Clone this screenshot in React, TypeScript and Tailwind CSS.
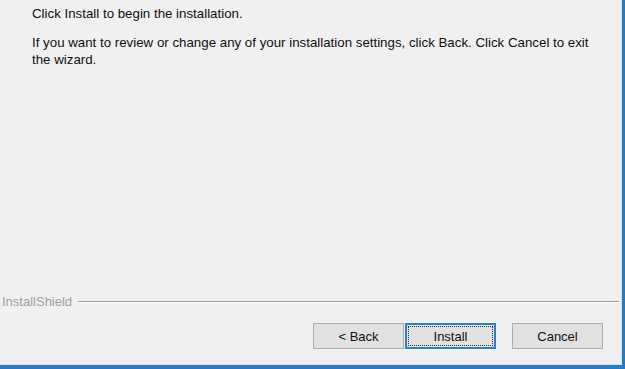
const font = { fontFamily: '"Liberation Sans", Arial, sans-serif' }

export default function App() {
  return (
    <div className="w-[625px] h-[369px] bg-[#2a7ac6] pr-[3px] pb-[4px]" style={font}>
      <div className="h-full bg-[#cfe3f4] pr-px pb-px">
        <div className="h-full bg-[#f0f0f0] flex flex-col border-l-2 border-l-[#e6f0f8] text-[13px] leading-[17px] text-[#111]">
          <div className="pl-[30px] pt-[5px] text-[13.3px]">
            <p className="whitespace-nowrap">Click Install to begin the installation.</p>
            <p className="mt-[12px]">
              <span className="whitespace-nowrap">
                If you want to review or change any of your installation settings, click Back. Click Cancel to exit
              </span>
              <br />
              the wizard.
            </p>
          </div>

          <div className="flex-1" />

          <div className="flex items-center h-[17px] mr-[2px]">
            <span className="text-[#a0a0a0]">InstallShield</span>
            <span className="flex-1 ml-[6px] h-[2px] border-t border-t-[#a0a0a0] border-b border-b-white" />
          </div>

          <div className="flex justify-end mt-[13px] mb-[15px] mr-[18px]">
            <button className="w-[91px] h-[26px] bg-[#e1e1e1] border border-[#adadad] text-[13px]">
              &lt; Back
            </button>
            <button className="ml-px w-[91px] h-[26px] bg-[#e1e1e1] border-2 border-[#2f7fc4] p-px text-[13px]">
              <span className="flex items-center justify-center w-full h-full border border-dotted border-[#333]">
                Install
              </span>
            </button>
            <button className="ml-[16px] w-[91px] h-[26px] bg-[#e1e1e1] border border-[#adadad] text-[13px]">
              Cancel
            </button>
          </div>
        </div>
      </div>
    </div>
  )
}
